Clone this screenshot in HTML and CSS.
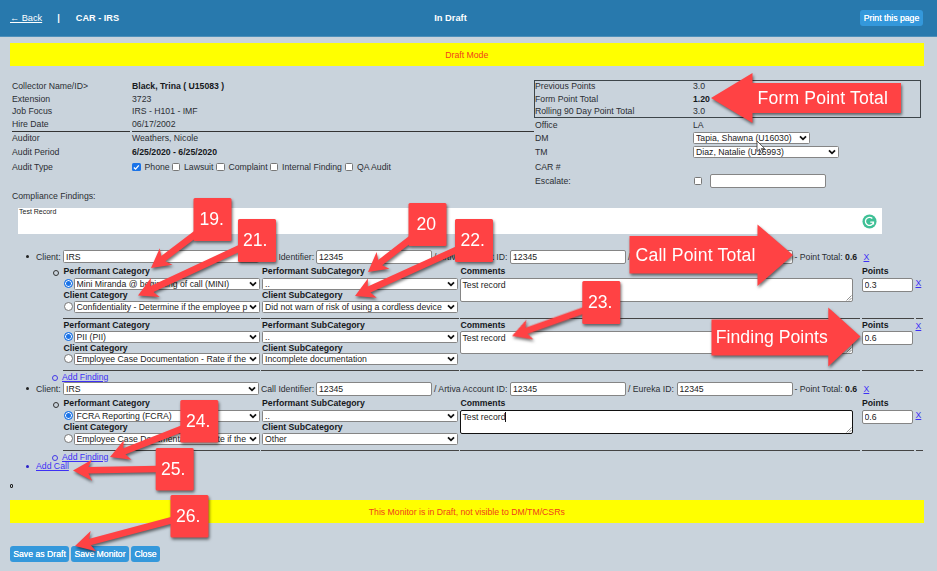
FILE: index.html
```
<!DOCTYPE html>
<html lang="en">
<head>
<meta charset="utf-8">
<title>CAR - IRS</title>
<link rel="stylesheet" href="styles.css">
</head>
<body>
<svg class="defs" aria-hidden="true">
  <symbol id="chev" viewBox="0 0 8 6"><path d="M1 1.300 4 4.300 7 1.300" fill="none" stroke="#111" stroke-width="1.800"/></symbol>
  <symbol id="grip" viewBox="0 0 6 6"><path d="M.5 5.500l5-5M3 5.500L5.500 3" fill="none" stroke="#777" stroke-width=".8"/></symbol>
</svg>
<header class="topbar">
  <div class="crumbs"><a href="#">← Back</a><b class="bar">|</b><b>CAR - IRS</b></div>
  <b class="state">In Draft</b>
  <button class="btn print">Print this page</button>
</header>
<main>
  <div class="banner">Draft Mode</div>
  <section class="info">
    <div class="facts">
      <div class="r r1"><span>Collector Name/ID&gt;</span><b>Black, Trina ( U15083 )</b></div>
      <div class="r r1"><span>Extension</span><span>3723</span></div>
      <div class="r r1"><span>Job Focus</span><span>IRS - H101 - IMF</span></div>
      <div class="r r4 ruled"><span>Hire Date</span><span>06/17/2002</span></div>
      <div class="r r5"><span>Auditor</span><span>Weathers, Nicole</span></div>
      <div class="r r6"><span>Audit Period</span><b>6/25/2020 - 6/25/2020</b></div>
      <div class="r r7"><span>Audit Type</span>
        <div class="checks">
          <label class="c1"><i class="box on"><svg viewBox="0 0 9 9"><path d="M2 4.700 3.800 6.500 7.200 2.500" fill="none" stroke="#fff" stroke-width="1.400"/></svg></i>Phone</label>
          <label class="c2"><i class="box"></i>Lawsuit</label>
          <label class="c3"><i class="box"></i>Complaint</label>
          <label class="c4"><i class="box"></i>Internal Finding</label>
          <label><i class="box"></i>QA Audit</label>
        </div>
      </div>
    </div>
    <div class="facts right">
      <div class="points">
        <div class="r r1"><span>Previous Points</span><span>3.0</span></div>
        <div class="r r1"><span>Form Point Total</span><b>1.20</b></div>
        <div class="r r1"><span>Rolling 90 Day Point Total</span><span>3.0</span></div>
      </div>
      <div class="r r4"><span>Office</span><span>LA</span></div>
      <div class="r r5"><span>DM</span><div class="select dm"><span>Tapia, Shawna (U16030)</span><svg><use href="#chev"/></svg></div></div>
      <div class="r r6"><span>TM</span><div class="select tm"><span>Diaz, Natalie (U15993)</span><svg><use href="#chev"/></svg></div></div>
      <div class="r r7"><span>CAR #</span></div>
      <div class="r r8"><span>Escalate:</span><div class="esc"><i class="box"></i><input type="text" aria-label="Escalate"></div></div>
    </div>
  </section>
  <div class="cf-label">Compliance Findings:</div>
  <div class="cf"><span>Test Record</span>
    <svg viewBox="0 0 16 16"><circle cx="8" cy="8" r="7.500" fill="#3fc096"/><path d="M11 4.800A4.300 4.300 0 1 0 12.200 8.600H8.800M12.200 8.300v3" fill="none" stroke="#fff" stroke-width="1.400"/></svg>
  </div>

  <ul class="calls">
    <li class="call">
      <div class="line"><span class="client">Client:</span><div class="select cs"><span>IRS</span><svg><use href="#chev"/></svg></div>
        <span class="l1">Call Identifier:</span><input value="12345" aria-label="Call Identifier"><span class="l2">/ Artiva Account ID:</span><input value="12345" aria-label="Artiva Account ID"><span class="l3">/ Eureka ID:</span><input class="bare" aria-label="Eureka ID"><span class="l4">- Point Total: <b>0.6</b></span><a href="#">X</a></div>
      <ul>
        <li class="finding">
          <div class="cell"><b>Performant Category</b><div class="pick"><i class="radio on"></i><div class="select"><span>Mini Miranda @ beginning of call (MINI)</span><svg><use href="#chev"/></svg></div></div><b class="h2">Client Category</b><div class="pick"><i class="radio"></i><div class="select"><span>Confidentiality - Determine if the employee p</span><svg><use href="#chev"/></svg></div></div></div>
          <div class="cell"><b>Performant SubCategory</b><div class="select"><span>..</span><svg><use href="#chev"/></svg></div><b class="h2">Client SubCategory</b><div class="select"><span>Did not warn of risk of using a cordless device</span><svg><use href="#chev"/></svg></div></div>
          <div class="cell"><b>Comments</b><div class="area">Test record<svg><use href="#grip"/></svg></div></div>
          <div class="cell"><b>Points</b><input value="0.3" aria-label="Points"></div>
          <div class="cell del"><a href="#">X</a></div>
        </li>
        <li class="finding second">
          <div class="cell"><b>Performant Category</b><div class="pick"><i class="radio on"></i><div class="select"><span>PII (PII)</span><svg><use href="#chev"/></svg></div></div><b class="h2">Client Category</b><div class="pick"><i class="radio"></i><div class="select"><span>Employee Case Documentation - Rate if the</span><svg><use href="#chev"/></svg></div></div></div>
          <div class="cell"><b>Performant SubCategory</b><div class="select"><span>..</span><svg><use href="#chev"/></svg></div><b class="h2">Client SubCategory</b><div class="select"><span>Incomplete documentation</span><svg><use href="#chev"/></svg></div></div>
          <div class="cell"><b>Comments</b><div class="area">Test record<svg><use href="#grip"/></svg></div></div>
          <div class="cell"><b>Points</b><input value="0.6" aria-label="Points"></div>
          <div class="cell del"><a href="#">X</a></div>
        </li>
        <li class="add"><a href="#">Add Finding</a></li>
      </ul>
    </li>
    <li class="call">
      <div class="line"><span class="client">Client:</span><div class="select cs"><span>IRS</span><svg><use href="#chev"/></svg></div>
        <span class="l1">Call Identifier:</span><input value="12345" aria-label="Call Identifier"><span class="l2">/ Artiva Account ID:</span><input value="12345" aria-label="Artiva Account ID"><span class="l3">/ Eureka ID:</span><input value="12345" aria-label="Eureka ID"><span class="l4">- Point Total: <b>0.6</b></span><a href="#">X</a></div>
      <ul>
        <li class="finding">
          <div class="cell"><b>Performant Category</b><div class="pick"><i class="radio on"></i><div class="select"><span>FCRA Reporting (FCRA)</span><svg><use href="#chev"/></svg></div></div><b class="h2">Client Category</b><div class="pick"><i class="radio"></i><div class="select"><span>Employee Case Documentation - Rate if the</span><svg><use href="#chev"/></svg></div></div></div>
          <div class="cell"><b>Performant SubCategory</b><div class="select"><span>..</span><svg><use href="#chev"/></svg></div><b class="h2">Client SubCategory</b><div class="select"><span>Other</span><svg><use href="#chev"/></svg></div></div>
          <div class="cell"><b>Comments</b><div class="area focus"><span class="caret">Test record</span><svg><use href="#grip"/></svg></div></div>
          <div class="cell"><b>Points</b><input value="0.6" aria-label="Points"></div>
          <div class="cell del"><a href="#">X</a></div>
        </li>
        <li class="add"><a href="#">Add Finding</a></li>
      </ul>
    </li>
    <li class="addcall"><a href="#">Add Call</a></li>
  </ul>
  <div class="stray"></div>
  <div class="banner">This Monitor is in Draft, not visible to DM/TM/CSRs</div>
  <div class="actions"><button class="btn b1">Save as Draft</button><button class="btn b2">Save Monitor</button><button class="btn b3">Close</button></div>
</main>

<svg class="notes" viewBox="0 0 937 571" width="937" height="571">
  <defs>
    <path id="head" d="M0 0 19 -10.500 15.500 -3.300V3.300L19 10.500z"/>
  </defs>
  <path d="M757 141v10.500l2.500-2.300 1.800 4 1.700-.8-1.700-3.800h3.400z" fill="#fff" stroke="#333" stroke-width=".8"/>
  <g class="callout">
    <g transform="translate(151 268) rotate(-37.300)"><use href="#head"/><rect x="15" y="-3.300" width="43" height="6.600"/></g>
    <g transform="translate(368 272) rotate(-37.700)"><use href="#head"/><rect x="15" y="-3.300" width="40" height="6.600"/></g>
    <rect x="193.500" y="198" width="38" height="43" rx="1.500"/>
    <rect x="408.500" y="203" width="38" height="43" rx="1.500"/>
  </g>
  <g class="callout">
    <g transform="translate(138 295.500) rotate(-25)"><use href="#head"/><rect x="15" y="-3.300" width="97" height="6.600"/></g>
    <g transform="translate(355 296) rotate(-24.500)"><use href="#head"/><rect x="15" y="-3.300" width="98" height="6.600"/></g>
    <g transform="translate(512 336) rotate(-19.600)"><use href="#head"/><rect x="15" y="-3.300" width="62" height="6.600"/></g>
    <g transform="translate(110 457) rotate(-21.400)"><use href="#head"/><rect x="15" y="-3.300" width="64" height="6.600"/></g>
    <g transform="translate(73 470.500) rotate(-1)"><use href="#head"/><rect x="15" y="-3.300" width="70" height="6.600"/></g>
    <g transform="translate(75 546) rotate(-14.900)"><use href="#head"/><rect x="15" y="-3.300" width="86" height="6.600"/></g>
    <rect x="238" y="219" width="38" height="43" rx="1.500"/>
    <rect x="455" y="219" width="38" height="43" rx="1.500"/>
    <rect x="582.300" y="281" width="38" height="43" rx="1.500"/>
    <rect x="180.300" y="400" width="38" height="42.500" rx="1.500"/>
    <rect x="155.700" y="448" width="38" height="42.500" rx="1.500"/>
    <rect x="170.500" y="495" width="38" height="42.500" rx="1.500"/>
    <path d="M711 98 752.500 73V83H901V113H752.500V123z"/>
    <path d="M629.500 236H757.500V224.500L793 255 757.500 286V273.500H629.500z"/>
    <path d="M711.500 319.500H828.300V307.500L860.500 336.500 828.300 366.500V355.500H711.500z"/>
  </g>
  <g class="words">
    <text x="199.500" y="225">19.</text><text x="416.500" y="230">20</text>
    <text x="243" y="246">21.</text><text x="460.500" y="246">22.</text>
    <text x="588" y="308">23.</text><text x="186" y="427">24.</text>
    <text x="161" y="475">25.</text><text x="176" y="522">26.</text>
    <text x="757.500" y="104" textLength="130.500">Form Point Total</text>
    <text x="635.500" y="261" textLength="120">Call Point Total</text>
    <text x="715.800" y="343" textLength="112">Finding Points</text>
  </g>
</svg>
</body>
</html>
```
FILE: styles.css
```
* { box-sizing: border-box; }
body { margin: 0; height: 571px; overflow: hidden; position: relative; background: #c9d3dc; color: #2b2e33; font: 8.7px/10px "Liberation Sans", Arial, sans-serif; }
ul { list-style: none; margin: 0; padding: 0; }
a { color: #3d30f5; text-decoration: underline; }
b { color: #16181b; }
i { font-style: normal; }
.defs { position: absolute; width: 0; height: 0; }
input { height: 14px; min-width: 0; padding: 0 2px; border: 1px solid #858585; border-radius: 2px; background: #fff; color: #222; font: inherit; }

.topbar { display: grid; grid-template-columns: 1fr auto 1fr; align-items: center; height: 37px; padding: 0 14px 0 10px; background: #2879ad; border-bottom: 1px solid #4d8fba; color: #fff; }
.topbar a, .topbar b { color: #fff; }
.crumbs { display: flex; font-size: 9.200px; }
.crumbs .bar { margin: 0 16px 0 15px; }
.state { font-size: 9.300px; position: relative; left: -16px; }
.btn { border: 0; border-radius: 3px; background: #3498db; color: #fff; height: 16px; padding: 0; font: 8.7px/16px "Liberation Sans", Arial, sans-serif; text-shadow: 0 0 .5px #fff; white-space: nowrap; }
.print { justify-self: end; width: 63px; }

main { padding: 6px 13.500px 0 10px; }
.banner { height: 23px; background: #ff0; color: #f0401c; text-align: center; line-height: 24px; }

.info { display: grid; grid-template-columns: 522.500px 387px; padding: 14px 0 0 1.500px; }
.r { display: grid; grid-template-columns: 118.500px 1fr; column-gap: 2px; align-items: center; white-space: nowrap; }
.r > :first-child { padding-left: .5px; }
.r1 { height: 12.500px; }
.r4 { height: 14px; }
.ruled > * { height: 14px; line-height: 13px; border-bottom: 1px solid #333; }
.r5 { height: 13px; }
.r6 { height: 15.500px; }
.r7 { height: 13.500px; }
.r8 { height: 15px; }
.right .r { grid-template-columns: 157px 1fr; }
.right .r > :first-child { padding-left: 1px; }
.points { height: 37.500px; box-shadow: inset 0 0 0 1px #3d454a; }
.checks, .checks label, .esc { display: flex; align-items: center; }
.checks label { gap: 4px; }
.c1, .c2, .c3, .c4 { flex: none; }
.c1 { width: 39.500px; } .c2 { width: 44.500px; } .c3 { width: 53.500px; } .c4 { width: 75px; }
.box { flex: none; width: 8.500px; height: 8.500px; border: 1px solid #777; border-radius: 1.500px; background: #fff; }
.box.on { border: 0; background: #1a73e8; }
.box svg { display: block; width: 100%; height: 100%; }
.esc { gap: 8px; padding-left: .5px; }
.esc input { width: 116px; }
.select { display: flex; align-items: center; height: 12px; min-width: 0; flex: 1; padding: 0 2px 0 2px; border: 1px solid #858585; border-radius: 1.500px; background: #fff; color: #222; }
.select span { flex: 1; overflow: hidden; white-space: nowrap; }
.select svg { flex: none; width: 8px; height: 6px; }
.dm { width: 117px; } .tm { width: 145.500px; }

.cf-label { height: 18px; padding: 1.500px 0 0 2px; margin-top: 1px; }
.cf { display: flex; justify-content: space-between; width: 864px; height: 26px; margin-left: 8px; padding: 0 5px 0 1px; background: #fff; color: #222; font-size: 7px; line-height: 8px; }
.cf svg { width: 15px; height: 15px; margin-top: 6px; }

.calls { padding: 16px 0 0 26px; }
.calls li { position: relative; }
.line { display: flex; align-items: center; height: 14px; white-space: nowrap; }
.line > * { flex: none; }
.call::before, .addcall::before, .finding:first-child::before, .add::before { content: ""; position: absolute; left: -10px; top: 5.500px; width: 3px; height: 3px; border-radius: 50%; background: #222; }
.client { width: 27px; }
.cs { flex: none; width: 195.500px; height: 12.500px; }
.l1 { width: 57.500px; padding-left: 2.500px; }
.line input { width: 116px; }
.l2 { width: 78px; padding-left: 2px; }
.l3 { width: 50.500px; padding-left: 2px; }
.l4 { width: 71px; padding-left: 2px; }

.finding { display: grid; grid-template-columns: 196.500px 197.500px 400px 52.500px 7px; column-gap: 1.500px; width: 860px; height: 55px; margin-left: 27px; }
.cell { display: flex; flex-direction: column; min-width: 0; border-bottom: 1px solid #444; white-space: nowrap; }
.cell > b { flex: none; height: 14.500px; line-height: 15px; padding-left: .5px; }
.cell > .h2 { height: 10.500px; line-height: 11px; }
.cell .select { flex: none; width: 100%; }
.cell:nth-child(2) .select { width: 196px; margin-left: .5px; padding-left: 2.500px; }
.cell:nth-child(2) > b { padding-left: 1px; }
.pick { display: flex; height: 12px; }
.cell .pick .select { flex: 1; width: auto; }
.radio { flex: none; width: 9px; height: 9px; margin: 1px 1px 0 .5px; border: 1px solid #777; border-radius: 50%; background: #fff; }
.radio.on { border-color: #1a73e8; background: #1a73e8; box-shadow: inset 0 0 0 1px #fff; }
.area { position: relative; width: 393px; height: 23.500px; padding: 1px 1.500px; border: 1px solid #858585; border-radius: 2px; background: #fff; color: #222; }
.area svg { position: absolute; right: 0; bottom: 0; width: 6px; height: 6px; }
.area.focus { border: 1.500px solid #111; }
.caret { border-right: 1px solid #111; }
.cell input { width: 51px; }
.del { padding-top: 14px; }
.second { height: 52px; }
.second .cell > b { height: 12px; line-height: 13px; }
.second .cell > .h2 { height: 10px; line-height: 11px; }
.second .del { padding-top: 2px; }
.calls .finding:first-child::before, .add::before { top: 6.500px; width: 4px; height: 4px; background: none; border: 1px solid #333; }
.add { height: 11px; margin-left: 26px; line-height: 12px; }
.calls .add::before { top: 4px; width: 4px; height: 4px; border-color: #4338e8; }
.addcall { height: 10px; line-height: 9px; }
.addcall::before { top: 3px; background: #2a20c8; }
.stray { width: 3px; height: 4px; margin: 12.500px 0 12px; border: 1px solid #222; border-radius: 1px; }
.actions { display: flex; gap: 2px; margin-top: 22.500px; }
.b1 { width: 59px; } .b2 { width: 58px; } .b3 { width: 29px; }

.notes { position: absolute; left: 0; top: 0; pointer-events: none; }
.callout { fill: #ff4244; filter: drop-shadow(1px 2px 1.500px rgba(0,0,0,.55)); }
.words { fill: #fff; font: 17.600px "Liberation Sans", Arial, sans-serif; }
```
